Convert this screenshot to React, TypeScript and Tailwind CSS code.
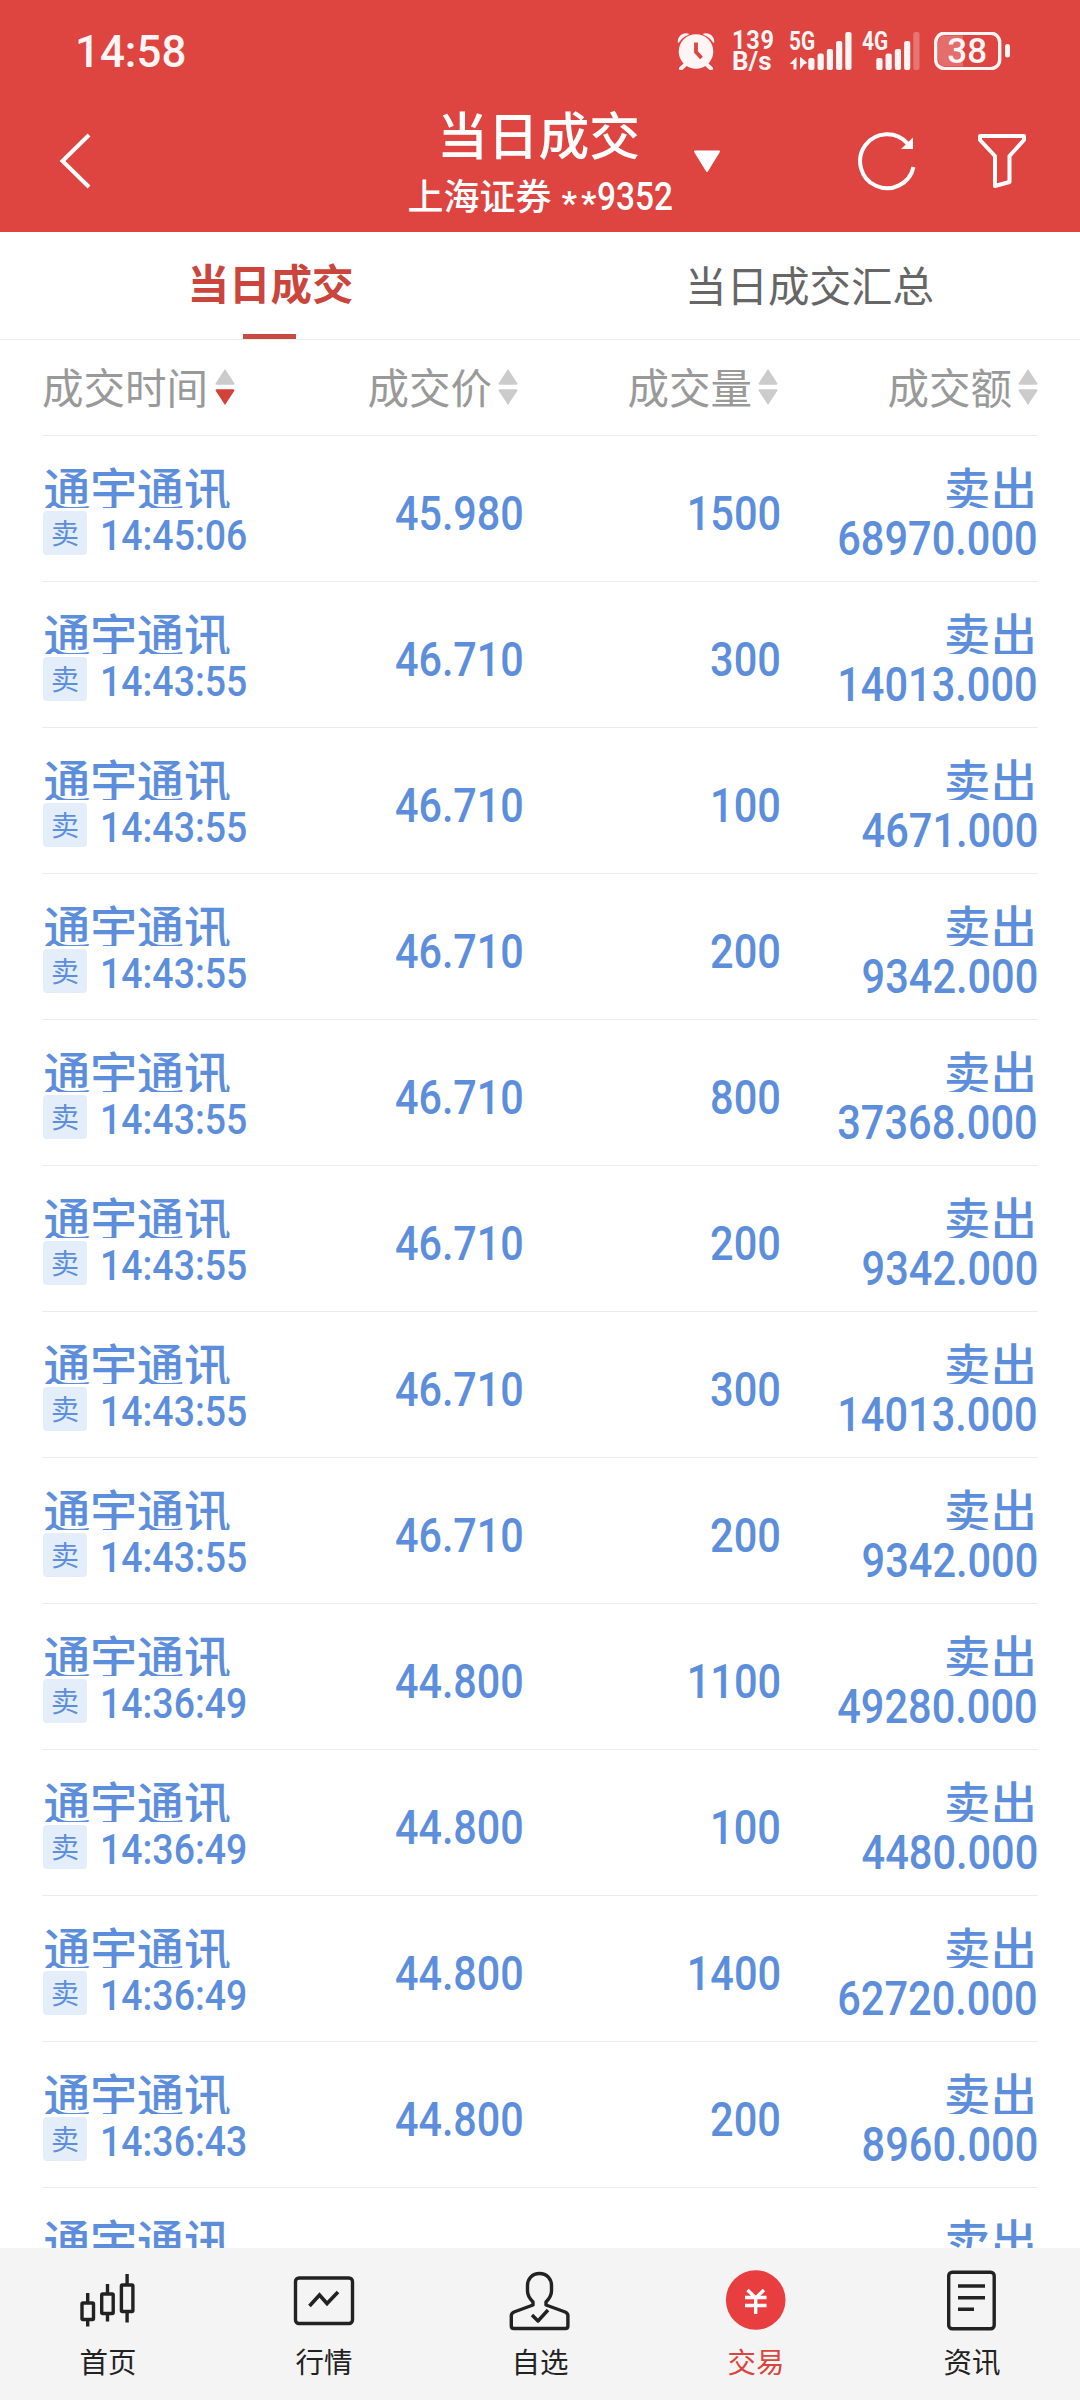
import React from "react";

const trades = [
  ["14:45:06", "45.980", "1500", "68970.000"],
  ["14:43:55", "46.710", "300", "14013.000"],
  ["14:43:55", "46.710", "100", "4671.000"],
  ["14:43:55", "46.710", "200", "9342.000"],
  ["14:43:55", "46.710", "800", "37368.000"],
  ["14:43:55", "46.710", "200", "9342.000"],
  ["14:43:55", "46.710", "300", "14013.000"],
  ["14:43:55", "46.710", "200", "9342.000"],
  ["14:36:49", "44.800", "1100", "49280.000"],
  ["14:36:49", "44.800", "100", "4480.000"],
  ["14:36:49", "44.800", "1400", "62720.000"],
  ["14:36:43", "44.800", "200", "8960.000"],
  ["14:36:43", "44.800", "200", "8960.000"],
];

const NUM = "font-['Roboto',sans-serif] font-medium inline-block whitespace-nowrap";

function Signal({ label, faded, arrows }: { label: string; faded?: boolean; arrows?: boolean }) {
  const tops = [26, 21.5, 17, 9, 0];
  return (
    <div className="relative h-[38px] w-[62px]">
      <span className="absolute left-[-1px] top-[-4px] origin-left scale-x-[0.8] font-['Roboto',sans-serif] text-[26px] font-bold leading-[26px]">
        {label}
      </span>
      <svg className="absolute inset-0" width="62" height="38" viewBox="0 0 62 38">
        {tops.map((t, i) => (
          <rect
            key={i}
            x={(arrows ? 18.3 : 13.3) + i * 9.25}
            y={t}
            width="6.2"
            height={38 - t}
            rx="2"
            fill="#fff5f5"
            opacity={faded && i === 4 ? 0.28 : 1}
          />
        ))}
        {arrows && <path d="M-.5 32 6.500 25v12.500H3.500V32zM10 25l.5 0 7 6-4 1.500V33l-3.500 4.500z" fill="#fff5f5" />}
      </svg>
    </div>
  );
}

function StatusBar() {
  return (
    <div className="flex h-[100px] items-start pl-[75px] pr-[68px] text-[#fff5f5]">
      <span className="mt-[29px] inline-block origin-left scale-x-[0.975] font-['Roboto',sans-serif] text-[45px] font-medium leading-[45px]">
        14:58
      </span>
      <div className="ml-auto flex pt-[32px]">
        <svg width="38" height="38" viewBox="0 0 38 38" fill="none">
          <circle cx="19" cy="19.500" r="17.300" fill="#fff5f5" />
          <path d="M9 32l-5 4.500M29 32l5 4.500" stroke="#fff5f5" strokeWidth="4" strokeLinecap="round" />
          <path d="M1.500 10C1.500 4.500 6 1 11 2.200 6.500 3.800 3.500 6.500 1.500 10zM36.500 10C36.500 4.500 32 1 27 2.200 31.500 3.800 34.500 6.500 36.500 10z" fill="#fff5f5" stroke="#fff5f5" strokeWidth="1.500" strokeLinejoin="round" />
          <path d="M19 10.500v9.500l5.500 6" stroke="#de4440" strokeWidth="3.800" />
        </svg>
        <div className="relative ml-[17px] h-[38px] w-[58px] font-['Roboto',sans-serif] text-[25px] font-bold leading-[20px]">
          <span className="absolute left-0 top-[-1px] origin-left scale-x-[0.94] tracking-[0.8px]">139</span>
          <span className="absolute left-0 top-[20px] origin-left scale-x-[1.04]">B/s</span>
        </div>
        <Signal label="5G" arrows />
        <div className="w-[11px]" />
        <Signal label="4G" faded />
        <svg className="ml-[9px]" width="78" height="38" viewBox="0 0 78 38" fill="none">
          <path d="M11 3.500h18v31H11a7 7 0 0 1-7-7v-17a7 7 0 0 1 7-7z" fill="#fff" opacity=".22" />
          <rect x="1.700" y="1.200" width="64" height="35.500" rx="9" stroke="#fff5f5" strokeWidth="3.400" />
          <rect x="71" y="12" width="5" height="13.500" rx="2.500" fill="#fff5f5" />
          <text x="33.200" y="31" textAnchor="middle" fontFamily="Roboto, sans-serif" fontSize="35" fontWeight="500" fill="#fff5f5">
            38
          </text>
        </svg>
      </div>
    </div>
  );
}

function TitleBar() {
  return (
    <div className="relative flex h-[132px] items-start justify-center text-white">
      <svg className="absolute left-[58px] top-[32px]" width="34" height="58" viewBox="0 0 34 58" fill="none" stroke="white" strokeWidth="4">
        <path d="M31 3 4.500 29 31 55" />
      </svg>
      <div className="flex flex-col items-center">
        <div className="mt-[8px] pr-[3px] font-['Noto_Sans_CJK_SC',sans-serif] text-[50.8px] font-medium leading-[50px]">当日成交</div>
        <div className="mt-[19px] flex h-[36px] w-[265px] items-center whitespace-nowrap font-['Noto_Sans_CJK_SC',sans-serif] text-[36px] font-medium leading-[36px]">
          <span className="relative top-[-1px]">上海证券</span>
          <span className="relative left-[10px] top-[8px] font-['Roboto',sans-serif] text-[34px] font-bold tracking-[4px]">**</span>
          <span className={NUM + " relative left-[7px] top-[2px] origin-left scale-x-[0.88] text-[38px]"}>9352</span>
        </div>
      </div>
      <svg className="absolute left-[693px] top-[49px]" width="28" height="24" viewBox="0 0 28 24" fill="white" stroke="white" strokeWidth="2" strokeLinejoin="round">
        <path d="M2 2.500h24L14 22z" />
      </svg>
      <svg className="absolute left-[857px] top-[29px]" width="62" height="62" viewBox="0 0 62 62" fill="none">
        <path d="M50.500 14.500A27 27 0 1 0 56.500 38" stroke="white" strokeWidth="4" />
        <path d="M56 8.500V20H44z" fill="white" />
      </svg>
      <svg className="absolute left-[976px] top-[32px]" width="52" height="58" viewBox="0 0 52 58" fill="none" stroke="white" strokeWidth="4" strokeLinejoin="round">
        <path d="M4 4h44v4L33.500 24v26L19 54V24L4 8z" />
      </svg>
    </div>
  );
}

function SortArrows({ active }: { active?: boolean }) {
  return (
    <svg width="20" height="38" viewBox="0 0 20 38">
      <path d="M10 1 19.500 15.500Q19.500 16.800 18 16.800H2Q.5 16.800.5 15.500z" fill="#cbcbcb" />
      <path d="M10 37 19.500 22.500Q19.500 21.200 18 21.200H2Q.5 21.200.5 22.500z" fill={active ? "#d24239" : "#cbcbcb"} />
    </svg>
  );
}

const GRID = "grid grid-cols-[260px_222px_257px_257px]";

function Heading({ label, active, className }: { label: string; active?: boolean; className: string }) {
  return (
    <div className={"flex items-center pb-px " + className}>
      <span className="relative top-[-1px]">{label}</span>
      <SortArrows active={active} />
    </div>
  );
}

function Row({ trade }: { trade: string[] }) {
  const [time, price, qty, amount] = trade;
  return (
    <div className={GRID + " h-[146px] shrink-0 border-b border-[#ededed] text-[#5c8edc]"}>
      <div>
        <div className="mt-[28px] h-[44px] overflow-hidden pl-[1.500px] font-['Noto_Sans_CJK_SC',sans-serif] text-[46.8px] font-medium leading-[46px]">
          通宇通讯
        </div>
        <div className="mt-[3px] flex h-[44px] pl-px">
          <div className="h-[44px] w-[44px] rounded-[4px] bg-[#e4edfa] text-center font-['Noto_Sans_CJK_SC',sans-serif] text-[28px] leading-[42px]">
            卖
          </div>
          <span className={NUM + " ml-[13px] origin-left scale-x-[0.88] text-[42.500px] leading-[50px]"}>{time}</span>
        </div>
      </div>
      <div className="flex items-center justify-end pt-[11px]">
        <span className={NUM + " origin-right scale-x-[0.86] text-[48px]"}>{price}</span>
      </div>
      <div className="flex items-center justify-end pt-[11px]">
        <span className={NUM + " origin-right scale-x-[0.865] text-[48px]"}>{qty}</span>
      </div>
      <div className="text-right">
        <div className="mt-[28px] h-[44px] overflow-hidden pr-px font-['Noto_Sans_CJK_SC',sans-serif] text-[46.5px] font-medium leading-[46px]">
          卖出
        </div>
        <span className={NUM + " mt-[7px] origin-right scale-x-[0.865] text-[48px] leading-[48px]"}>{amount}</span>
      </div>
    </div>
  );
}

function NavItem({ label, active, children }: { label: string; active?: boolean; children: React.ReactNode }) {
  return (
    <div className={"flex flex-1 flex-col items-center pt-[18px] " + (active ? "text-[#d9453f]" : "text-[#222]")}>
      <svg width="68" height="68" viewBox="0 0 68 68" fill="none" stroke="#222" strokeWidth="3.400" strokeLinejoin="round">
        {children}
      </svg>
      <span className="mt-[11px] font-['Noto_Sans_CJK_SC',sans-serif] text-[28.5px] leading-[32px]">{label}</span>
    </div>
  );
}

export default function App() {
  return (
    <div className="flex h-[2400px] w-[1080px] flex-col overflow-hidden bg-white">
      <header className="h-[232px] shrink-0 bg-[#de4440]">
        <StatusBar />
        <TitleBar />
      </header>

      <div className="flex h-[108px] shrink-0 border-b border-[#ececec] font-['Noto_Sans_CJK_SC',sans-serif] text-[41.5px] leading-[42px]">
        <div className="flex w-[539px] flex-col items-center">
          <span className="mt-[29px] pl-[2px] font-bold text-[#cb453d]">当日成交</span>
          <div className="mt-auto h-[5px] w-[53px] bg-[#c94a42]" />
        </div>
        <div className="flex w-[541px] justify-center">
          <span className="mt-[31px] text-[#666]">当日成交汇总</span>
        </div>
      </div>

      <main className="flex min-h-0 flex-1 flex-col overflow-hidden px-[42px]">
        <div className={GRID + " h-[96px] shrink-0 border-b border-[#ededed] font-['Noto_Sans_CJK_SC',sans-serif] text-[41.5px] leading-[42px] text-[#999]"}>
          <Heading label="成交时间" active className="gap-[7px]" />
          <Heading label="成交价" className="justify-end gap-[6px] pr-[6px]" />
          <Heading label="成交量" className="justify-end gap-[6px] pr-[3px]" />
          <Heading label="成交额" className="justify-end gap-[6px]" />
        </div>
        {trades.map((t, i) => (
          <Row key={i} trade={t} />
        ))}
      </main>

      <nav className="flex h-[152px] shrink-0 bg-[#f4f4f4]">
        <NavItem label="首页">
          <rect x="8" y="37" width="11.500" height="16.500" rx="1" />
          <rect x="27.700" y="28" width="11.500" height="19.500" rx="1" />
          <rect x="47.400" y="19" width="11.500" height="26.500" rx="1" />
          <path d="M13.700 27v10M13.700 53.500v7M33.500 18v10M33.500 47.500v8M53.100 8v11M53.100 45.500v11" />
        </NavItem>
        <NavItem label="行情">
          <rect x="5.500" y="12" width="57" height="45.500" rx="3.500" />
          <path d="M19.500 40 29.500 29 37 37.500 48 26" strokeWidth="3.600" strokeLinejoin="miter" />
        </NavItem>
        <NavItem label="自选">
          <path d="M33.500 7.500c-7.500 0-12 5.500-12 12v5.500c0 4.500 2 7.500 5.500 11v3L8 46c-2 1-2.700 2-2.700 3.500V60q0 2.500 2.500 2.500h51.600q2.500 0 2.500-2.500V49.500c0-1.500-.7-2.500-2.700-3.500L40 39v-3c3.500-3.500 5.500-6.500 5.500-11v-5.500c0-6.500-4.500-12-12-12z" />
          <path d="M26 49l6 6L42 44" />
        </NavItem>
        <NavItem label="交易" active>
          <circle cx="33.700" cy="34" r="29.800" fill="#e93e40" stroke="none" />
          <path d="M25.500 24l8.200 8 8.200-8M33.700 31v17M23 31.500h21.500M23 39.500h21.500" stroke="#fff" strokeWidth="3.400" strokeLinejoin="miter" />
        </NavItem>
        <NavItem label="资讯">
          <rect x="10.700" y="6.200" width="45.500" height="56.500" rx="3.500" />
          <path d="M20 20h27M20 31.700h27M20 43.300h16" />
        </NavItem>
      </nav>
    </div>
  );
}
